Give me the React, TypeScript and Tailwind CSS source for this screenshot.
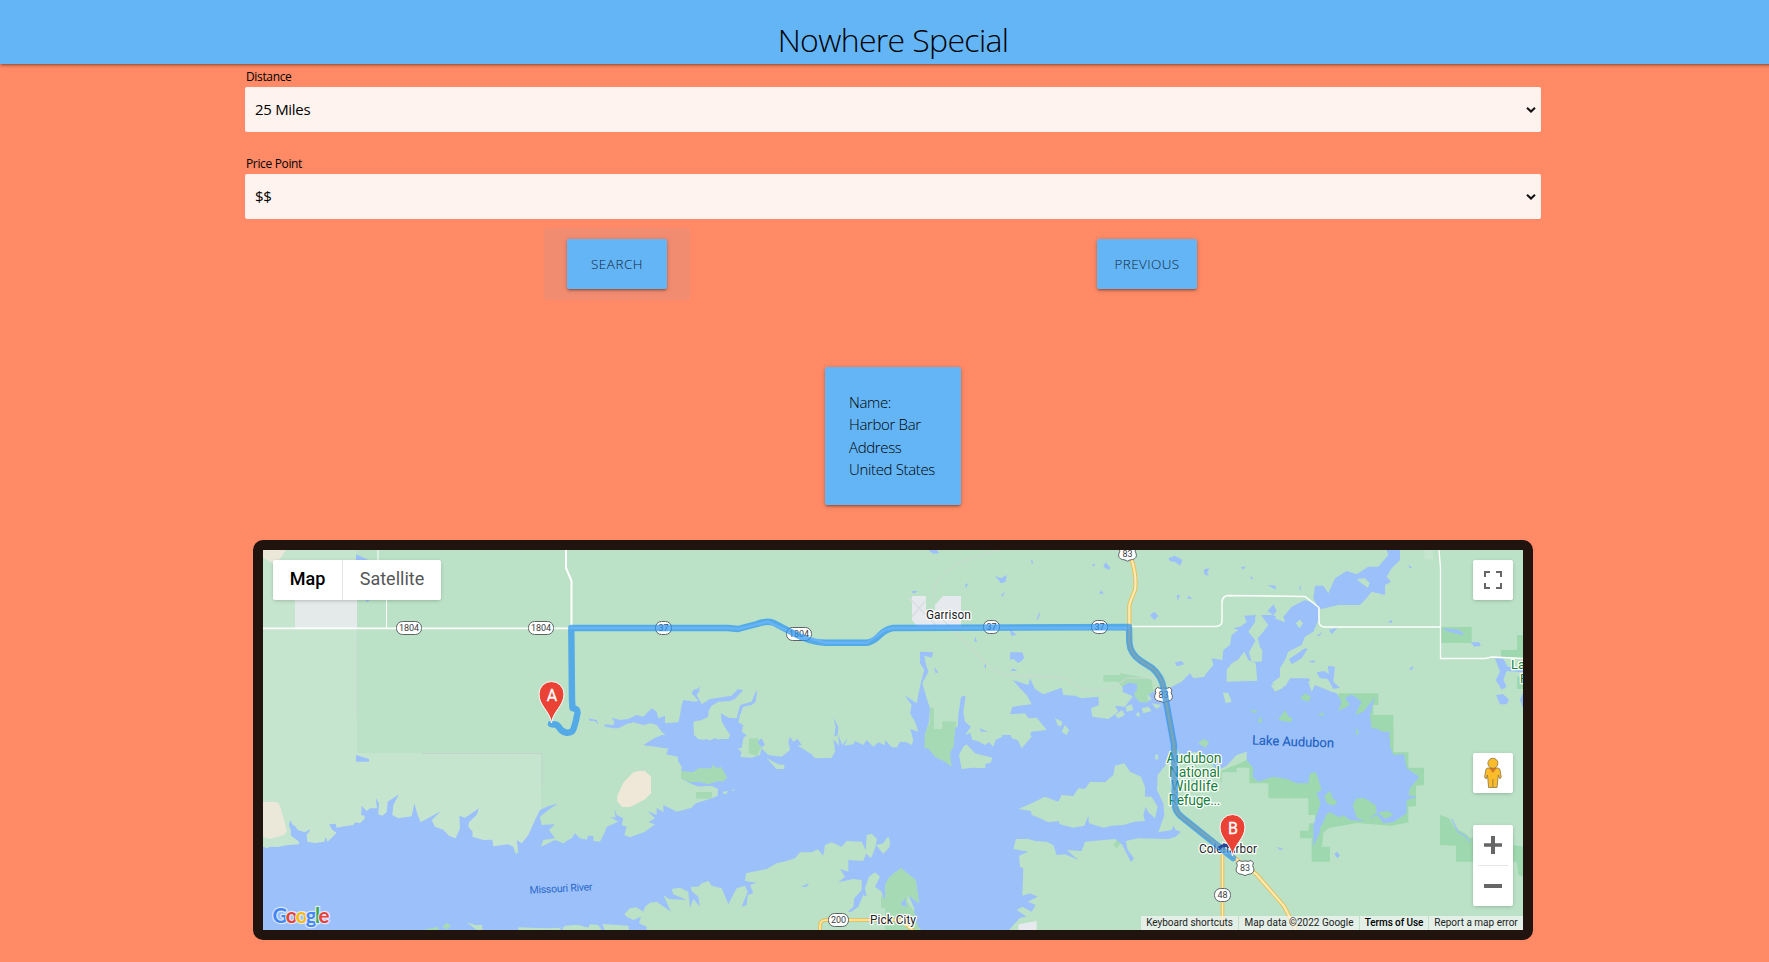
import type { ReactNode } from "react";

const LAND = "#bbe2c6";
const WATER = "#9cc0fa";
const PARK = "#a6dab4";
const REFUGE = "#9ed8ae";
const PALE = "#c6e5cf";
const SAND = "#ebe8da";
const TOWN = "#e6e9ed";

function Tile({ x, y, children }: { x: number; y: number; children: ReactNode }) {
  return <g transform={`translate(${x} ${y}) scale(0.333333)`}>{children}</g>;
}

function Poly({ p, f }: { p: string; f: string }) {
  return <polygon points={p} fill={f} />;
}

function Oval({ x, y, label, w }: { x: number; y: number; label: string; w: number }) {
  return (
    <g>
      <rect x={x - w / 2} y={y - 6.5} width={w} height={13} rx={6} fill="#fff" stroke="#5f6368" strokeWidth={1} />
      <text x={x} y={y + 3.2} textAnchor="middle" fontSize={9} fill="#3c4043">{label}</text>
    </g>
  );
}

function UsShield({ x, y, label }: { x: number; y: number; label: string }) {
  return (
    <g>
      <path
        d={`M${x - 6} ${y - 7.5}q2.5 1.5 6 .4q3.500 1.100 6 -.4l2.500 2.300q-1.800 3 .2 5.500q1 4.500 -3.500 5.700q-3 .2 -5.200 1.700q-2.200 -1.500 -5.200 -1.700q-4.500 -1.200 -3.500 -5.700q2 -2.500 .2 -5.500z`}
        fill="#fff"
        stroke="#5f6368"
        strokeWidth={1}
      />
      <text x={x} y={y + 3.2} textAnchor="middle" fontSize={9} fill="#3c4043">{label}</text>
    </g>
  );
}

function Pin({ x, y, label }: { x: number; y: number; label: string }) {
  return (
    <g>
      <path
        d={`M${x} ${y}C${x - 1.5} ${y - 12} ${x - 12.5} ${y - 17} ${x - 12.5} ${y - 29}a12.500 12.500 0 0 1 25 0C${x + 12.5} ${y - 17} ${x + 1.5} ${y - 12} ${x} ${y}z`}
        fill="#ea4335"
        stroke="#fff"
        strokeWidth={1}
      />
      <text x={x + 0.5} y={y - 22.5} textAnchor="middle" fontSize={16} fill="#fff" stroke="#fff" strokeWidth={0.3}>{label}</text>
    </g>
  );
}

const ROUTE =
  "M551 724L555 724.500Q558 725 559.500 728Q562 732 567 732.800Q572 733 573.500 729Q576 722 577.500 713Q578 709 572.500 708L572 700L571.300 628L728 628Q733 628.500 738 629L757 624Q768 620 774 623L792 632.500Q810 642.500 825 642.700L867 642.700Q873 642 880 635Q886 629 893 628L1129 627L1129.300 642Q1130 654 1141 661L1152 668Q1162 676 1164 690L1174 745L1175 806Q1176 813 1183 818L1233 858";

function MapCanvas() {
  return (
    <svg className="block h-full w-full font-['Roboto',sans-serif]" viewBox="263 550 1260 380">
      <rect x={263} y={550} width={1260} height={380} fill={LAND} />
      {/* tribal and federal land tints */}
      <polygon points="263,550 357,550 357,753 541,753 541,815 520,850 263,850" fill={PALE} />
      <polyline points="357,634 357,715" fill="none" stroke="#c5d6d4" strokeWidth={1} />
      <polyline points="422,753.500 542,753.500 542,788" fill="none" stroke="#c3d3cb" strokeWidth={1} />
      <rect x={295} y={590} width={62} height={38} fill="#e4e9ea" />
      <polygon points="263,550 286,550 279,560 278,566 263,558" fill={SAND} />
      <polygon points="263,802 277,802 280,806 287,831 284,835 270,839 263,837" fill={SAND} />

      {/* refuge */}
      <Tile x={1130} y={735}>
        <Poly f={REFUGE} p="220,145 262,112 330,85 360,70 620,-60 650,-60 790,-60 790,52 835,52 835,98 882,98 882,150 858,152 858,212 835,215 835,262 785,272 680,264 580,282 578,320 575,335 600,335 600,380 545,380 545,310 510,310 510,287 535,287 538,265 555,265 555,240 535,240 535,190 415,190 415,145 358,145 358,98 320,98 320,112 275,112 275,145" />
        <Poly f={REFUGE} p="930,240 955,248 975,280 1005,295 1022,310 1050,296 1150,300 1150,330 1179,335 1179,425 1165,420 1160,380 978,380 978,332 930,330" />
      </Tile>
      <Tile x={1205} y={535}>
        <Poly f={REFUGE} p="400,475 520,475 520,510 505,510 505,580 565,580 565,640 400,640" />
        <Poly f={REFUGE} p="707,276 800,276 800,324 707,324" />
        <Poly f={REFUGE} p="936,300 955,300 955,368 888,368 888,345 936,345" />
        <Poly f={REFUGE} p="936,425 955,425 955,462 936,462" />
        <Poly f={PALE} p="658,45 684,45 684,75 658,72" />
      </Tile>

      {/* water */}
      <Tile x={245} y={735}>
        <Poly f={WATER} p="54,335 67,340 75,335 98,336 130,330 163,328 160,318 138,302 137,285 132,270 136,255 142,268 152,275 158,285 180,292 195,283 192,292 185,298 187,320 210,324 238,320 242,306 248,320 275,293 262,285 252,268 272,266 275,278 290,275 325,270 332,262 345,265 360,250 358,242 348,240 350,212 365,228 375,220 396,220 392,188 402,205 400,238 412,242 425,232 428,200 462,178 445,210 442,240 460,250 500,244 508,205 518,240 527,262 588,228 560,256 570,275 595,284 612,302 632,310 645,280 643,242 660,248 680,235 702,220 695,240 672,262 670,275 683,290 682,305 715,315 742,314 745,334 790,328 805,335 812,358 820,352 815,315 830,325 850,300 870,255 885,225 905,215 940,205 910,225 885,245 890,270 930,268 912,285 930,310 895,315 888,335 910,325 930,315 955,325 975,322 990,310 990,590 54,590" />
        <Poly f={WATER} p="333,60 350,65 372,72 372,80 333,80" />
      </Tile>
      <Tile x={245} y={535}>
        <Poly f={WATER} p="333,58 350,65 372,76 333,80" />
        <Poly f={WATER} p="356,192 378,192 368,201" />
      </Tile>
      <Tile x={565} y={535}>
        <Poly f={WATER} p="235,630 275,605 308,605 290,590 275,570 258,565 235,570 205,562 185,567 160,580 145,580 120,575 118,568 145,570 148,560 140,548 165,555 190,552 215,540 235,545 260,520 275,530 280,550 300,542 300,565 340,562 345,540 350,510 355,495 390,500 400,497 380,475 385,465 400,460 405,452 402,470 395,480 405,498 410,508 435,492 460,488 500,482 518,463 535,465 510,492 495,498 460,500 440,512 430,530 430,545 410,555 385,560 387,600 400,612 430,618 450,610 475,620 500,618 500,605 485,585 470,560 468,535 490,548 515,550 525,510 560,500 570,475 577,465 572,500 560,510 535,515 525,540 520,562 535,570 530,590 545,600 535,610 530,640 300,640" />
        <Poly f={WATER} p="70,550 95,555 100,570 90,558 75,558" />
        <Poly f={WATER} p="805,548 820,575 818,600 808,605 812,575" />
      </Tile>
      <Tile x={565} y={735}>
        <Poly f={WATER} p="0,320 20,310 30,295 45,310 65,314 70,302 85,302 85,318 105,320 120,290 125,275 160,260 135,245 152,248 148,220 155,240 175,250 170,270 185,275 178,300 195,307 240,290 270,268 250,262 270,250 248,228 275,240 275,218 295,232 295,210 335,230 380,218 392,205 440,190 458,182 458,162 440,154 400,155 372,143 348,130 350,95 340,80 338,65 303,58 312,35 330,15 325,5 290,8 262,30 240,32 270,12 290,0 385,0 400,18 425,12 445,22 465,12 490,12 495,0 530,0 518,40 530,52 526,66 560,68 585,60 590,36 575,22 590,10 600,30 588,38 610,60 650,65 675,45 670,20 675,5 685,20 698,12 710,30 698,32 740,58 750,70 800,68 810,50 808,30 805,12 822,32 820,0 832,30 848,10 838,32 865,28 870,18 895,30 905,15 925,35 940,22 980,40 990,30 990,405 975,420 965,445 962,480 968,500 958,503 950,470 930,455 945,425 930,412 912,425 900,460 905,485 895,480 880,515 860,530 848,530 865,515 868,490 890,465 890,435 865,432 820,442 840,425 825,402 850,410 850,375 895,378 905,350 890,320 845,318 830,335 800,322 780,330 775,362 758,343 740,352 705,352 690,370 665,378 635,385 605,402 543,415 540,438 575,443 555,450 565,475 548,480 545,510 530,515 548,470 540,452 515,460 490,508 470,460 440,452 430,438 410,445 400,455 378,455 380,468 400,485 405,515 385,492 375,518 370,470 345,458 320,462 325,478 365,495 312,492 295,480 318,530 275,500 255,503 240,515 235,530 215,517 195,520 178,537 185,545 205,555 228,545 222,565 245,575 245,590 0,590" />
        <Poly f={WATER} p="708,455 732,444 725,456" />
      </Tile>
      <Tile x={885} y={535}>
        <Poly f={WATER} p="105,350 145,352 140,368 118,362 122,385 130,410 112,445 125,490 135,520 132,560 120,600 118,640 60,640 75,600 70,580 100,590 90,560 75,535 80,510 58,480 95,505 108,440 118,405 105,385" />
        <Poly f={WATER} p="228,485 242,482 235,530 240,560 258,575 240,600 262,590 255,615 290,605 285,580 330,600 350,615 380,600 420,620 440,590 485,585 455,548 430,550 420,535 375,538 382,515 440,508 425,480 405,460 383,435 430,450 435,430 450,462 475,478 530,458 535,480 570,482 590,490 640,485 642,510 618,520 622,545 670,552 700,530 690,512 720,515 740,488 770,500 800,495 790,478 770,478 755,500 735,478 712,470 718,450 750,443 758,465 830,470 860,455 890,440 915,415 925,430 960,425 990,410 990,640 200,640 200,580 218,575 220,540" />
        <Poly f={WATER} p="375,352 412,352 418,370 400,385 385,372 375,375" />
        <Poly f={WATER} p="330,122 348,130 365,120 362,140 348,145" />
        <Poly f={WATER} p="850,70 870,62 893,75 885,92 872,82 855,78" />
        <Poly f={WATER} p="795,240 808,230 820,243 808,256" />
        <Poly f={WATER} p="655,95 662,82 676,98 672,105" />
        <Poly f={WATER} p="956,105 972,98 965,112 972,124 958,118" />
        <Poly f={WATER} p="870,382 890,378 898,388 875,394" />
        <Poly f={WATER} p="130,45 155,45 163,55 145,56" />
        <Poly f={WATER} p="437,75 444,78 442,90" />
        <Poly f={WATER} p="240,150 251,143 243,160" />
        <Poly f={WATER} p="455,255 460,238 466,232 460,252" />
        <Poly f={WATER} p="642,175 650,166 656,178" />
        <Poly f={WATER} p="875,180 885,180 878,198" />
        <Poly f={WATER} p="905,190 912,182 922,192" />
        <Poly f={WATER} p="267,318 272,305 276,322" />
        <Poly f={WATER} p="375,282 395,300 378,302" />
        <Poly f={WATER} p="375,408 385,400 397,408" />
        <Poly f={WATER} p="147,395 160,412 152,415" />
        <Poly f={WATER} p="348,180 360,170 352,186" />
        <Poly f={WATER} p="82,168 96,168 92,174 82,174" />
        <Poly f={WATER} p="620,92 628,85 630,94" />
        <Poly f={WATER} p="297,395 303,385 303,400" />
      </Tile>
      <Tile x={885} y={735}>
        <Poly f={WATER} p="0,0 855,0 860,60 838,95 818,120 816,165 835,205 838,240 820,292 860,285 865,272 872,285 888,290 872,305 850,312 760,310 722,318 728,345 747,370 738,382 712,330 690,312 600,320 590,348 545,345 580,375 540,358 515,360 505,330 485,320 450,318 430,312 393,312 385,342 430,350 402,362 405,395 415,400 412,482 435,475 458,485 428,500 452,510 440,530 412,515 395,525 425,545 405,548 372,585 108,585 85,560 88,520 70,480 102,505 92,435 48,400 12,428 0,450" />
      </Tile>
      <Tile x={1205} y={535}>
        <Poly f={WATER} p="0,420 25,390 20,370 52,375 55,345 75,330 80,300 100,285 85,280 105,275 125,262 118,242 152,240 150,262 130,290 150,315 155,345 165,335 158,310 175,290 190,270 168,240 205,240 240,262 235,245 260,215 300,195 325,205 340,220 340,255 325,290 300,305 290,330 250,350 240,375 225,400 225,425 200,445 240,455 255,430 310,430 330,450 380,470 395,475 410,500 400,528 435,510 420,490 440,478 470,500 450,540 475,530 510,487 495,540 500,580 520,582 555,610 555,650 0,650" />
        <Poly f={WATER} p="325,190 330,152 355,152 370,175 390,130 425,108 455,118 490,95 520,95 550,60 545,45 585,45 585,75 560,100 545,125 558,140 540,150 540,180 500,170 480,195 465,210 400,210 350,222 340,218" />
        <Poly f={WATER} p="188,228 205,208 215,228 205,240" />
        <Poly f={WATER} p="252,372 300,340 308,342 290,370 260,388" />
        <Poly f={WATER} p="335,412 358,408 372,418 368,392 390,395 385,440 405,458 385,462 368,432 345,430" />
        <Poly f={WATER} p="715,280 760,284 778,296 770,300 718,286" />
        <Poly f={WATER} p="797,322 822,322 828,332 808,335" />
        <Poly f={WATER} p="870,370 895,372 908,395 955,400 955,412 905,408 895,435 905,455 890,464 872,435 885,410" />
        <Poly f={WATER} p="873,480 895,478 912,495 905,508 885,508" />
        <Poly f={WATER} p="955,470 945,495 955,522" />
        <Poly f={WATER} p="372,285 398,278 380,298" />
        <Poly f={WATER} p="187,150 212,152 212,164" />
        <Poly f={WATER} p="282,165 288,148 288,162" />
        <Poly f={WATER} p="0,102 12,104 0,122" />
        <Poly f={WATER} p="107,97 122,94 116,104" />
        <Poly f={WATER} p="134,124 144,128 142,136" />
        <Poly f={WATER} p="610,90 622,97 614,100" />
        <Poly f={WATER} p="548,262 562,254 560,264" />
        <Poly f={WATER} p="612,402 624,392 622,405" />
        <Poly f={WATER} p="335,302 352,290 345,302" />
        <Poly f={WATER} p="310,378 332,376 325,384" />
      </Tile>
      <Tile x={1130} y={735}>
        <Poly f={WATER} p="120,-10 780,-10 775,20 790,60 822,58 830,100 868,125 840,160 835,180 862,186 830,195 830,235 790,262 760,265 742,240 700,258 660,255 640,240 610,258 590,235 570,290 550,335 550,270 572,205 560,175 575,165 558,112 540,115 535,145 500,145 470,132 430,125 385,140 368,125 370,100 350,75 350,50 320,60 290,92 260,108 240,75 200,50 150,60" />
        <Poly f={WATER} p="613,357 622,350 630,362 622,370" />
        <Poly f={WATER} p="440,335 460,342 450,345" />
        <polyline points="965,252 985,292 1005,302 1020,320" fill="none" stroke={WATER} strokeWidth={4} />
      </Tile>

      {/* islands, peninsulas and parks */}
      <Tile x={245} y={735}>
        <Poly f={PARK} p="535,585 580,575 580,585" />
        <Poly f={PARK} p="592,575 605,564 618,572 605,584" />
        <Poly f={LAND} p="665,562 690,570 712,570 712,585 695,585" />
        <Poly f={LAND} p="820,577 900,580 950,578 942,586 820,586" />
        <Poly f={LAND} p="955,575 990,570 990,586 952,586" />
      </Tile>
      <Tile x={565} y={735}>
        <Poly f={PARK} p="348,108 385,112 400,100 440,100 442,88 455,100 468,95 487,128 472,140 460,138 430,148 400,140 375,142 348,130" />
        <Poly f={LAND} p="350,142 372,148 405,155 440,153 459,162 455,182 390,200" />
        <Poly f={PARK} p="393,171 441,171 441,191 393,191" />
        <Poly f={LAND} p="474,170 488,168 486,176 474,176" />
        <Poly f={LAND} p="497,166 512,163 505,167" />
        <Poly f={PARK} p="553,10 580,10 580,28 590,38 582,48 578,62 550,55" />
        <Poly f={LAND} p="605,70 640,88 658,90 658,102 635,102" />
        <Poly f={LAND} p="905,300 920,296 936,312 930,340 918,370 902,355" />
        <Poly f={LAND} p="933,330 955,325 968,305 974,335 955,356" />
        <Poly f={PARK} p="965,440 990,410 990,518 948,518 948,480 965,500" />
        <Poly f="#efe8d8" p="205,112 225,107 240,108 258,125 258,175 240,193 195,216 172,216 156,198 158,180 175,143" />
        <Poly f={LAND} p="0,572 40,570 70,578 75,568 100,570 110,586 0,586" />
        <Poly f={LAND} p="112,567 190,572 192,586 120,586" />
      </Tile>
      <Tile x={885} y={535}>
        <Poly f={PARK} p="655,420 705,420 705,415 785,428 800,435 805,470 788,480 790,502 765,502 750,485 745,465 715,462 700,440 655,440" />
        <Poly f={WATER} p="712,455 730,443 756,447 755,468 735,480 715,472" />
        <Poly f={LAND} p="690,540 712,525 720,540 700,550" />
        <Poly f={LAND} p="722,515 740,508 745,525 725,530" />
        <Poly f={LAND} p="770,520 790,515 800,528 775,535" />
        <Poly f={LAND} p="800,505 830,510 815,522" />
        <Poly f={LAND} p="750,540 762,530 765,545" />
        <Poly f={LAND} p="510,550 532,560 528,575 518,570" />
        <Poly f={LAND} p="530,590 540,570 552,585 545,600" />
        <Poly f={PARK} p="135,518 147,520 147,582 172,582 172,558 215,560 212,570 205,640 118,640 122,590 135,560" />
        <Poly f={LAND} p="148,560 170,545 170,582 148,582" />
      </Tile>
      <Tile x={885} y={735}>
        <Poly f={LAND} p="0,-20 75,-20 85,15 80,30 65,22 45,20 35,38 20,36 0,15" />
        <Poly f={PARK} p="118,0 205,0 207,30 195,55 200,95 180,80 150,65 120,28" />
        <Poly f={LAND} p="255,-10 262,15 278,18 300,30 312,22 325,35 332,15 352,5 345,-10" />
        <Poly f={LAND} p="375,-10 380,10 398,15 410,40 440,5 430,-10" />
        <Poly f={LAND} p="245,28 270,55 322,68 318,82 300,88 302,100 265,98 230,102 222,60 235,35" />
        <Poly f={LAND} p="400,222 440,205 480,185 520,200 530,180 565,183 580,160 600,162 615,140 660,142 685,120 690,92 718,85 735,110 768,125 780,155 780,185 800,185 818,215 810,250 790,232 782,215 775,240 780,258 748,260 715,270 680,272 655,278 612,265 610,242 598,272 565,278 525,268 520,258 490,262 470,252 440,240 438,228" />
        <Poly f={LAND} p="810,60 818,58 820,72 812,74" />
        <Poly f={PARK} p="685,330 695,315 708,325 695,340" />
        <Poly f={LAND} p="0,325 12,305 15,328 0,345" />
        <Poly f={PARK} p="0,450 12,428 48,400 92,435 102,505 70,480 66,500 88,530 95,565 105,585 0,585" />
        <Poly f={WATER} p="48,505 60,490 66,515 52,512" />
        <Poly f={TOWN} p="400,585 400,568 455,558 455,585" />
        <Poly f={PARK} p="940,25 955,12 972,20 962,38" />
      </Tile>
      <Tile x={1205} y={535}>
        <Poly f={LAND} p="118,350 130,375 152,385 157,437 65,440 65,405 80,385 98,375" />
        <Poly f={LAND} p="150,320 172,345 170,380 140,380 132,352" />
        <Poly f={LAND} p="272,265 285,254 294,265 284,280" />
        <Poly f={LAND} p="210,250 225,232 238,262" />
        <Poly f={LAND} p="455,132 480,130 494,145 488,158 470,145" />
        <Poly f={LAND} p="54,472 70,475 80,500 62,505" />
        <Poly f={LAND} p="198,450 225,443 235,458 210,470" />
        <Poly f={LAND} p="310,440 325,430 330,450 320,470" />
        <Poly f={REFUGE} p="285,490 300,475 318,485 310,500" />
        <Poly f={REFUGE} p="220,555 240,525 250,545 262,548 258,562" />
        <Poly f={REFUGE} p="158,560 168,543 170,565" />
        <Poly f={REFUGE} p="135,525 158,528 148,535" />
        <Poly f={REFUGE} p="336,540 356,532 355,542" />
        <Poly f={REFUGE} p="452,575 462,598 454,598" />
      </Tile>
      <Tile x={1130} y={735}>
        <Poly f={LAND} p="118,60 180,60 230,78 262,110 275,145 290,150 130,250" />
        <Poly f={REFUGE} p="583,182 600,168 608,190 622,200 612,212 590,205" />
        <Poly f={REFUGE} p="668,210 680,190 705,190 738,212 740,235 705,258 680,248" />
        <Poly f={REFUGE} p="745,232 775,228 790,240 765,252" />
        <Poly f={REFUGE} p="570,280 598,230 650,260 600,275 572,300" />
      </Tile>

      {/* Garrison */}
      <polygon points="912,596 926,596 926,610 935,610 935,605 943,596 961,596 961,627 918,627 912,620" fill={TOWN} />
      <path d="M909 598L936 625M925 601L912 617" stroke="#dadde0" strokeWidth={1.5} fill="none" />
      <path
        d="M1000 550Q975 556 958 563Q938 577 934 588L934 600M936 613L958 635L990 667Q998 674 1010 675L1063 678Q1070 680 1080 688L1086 690H1110L1127 678H1155"
        fill="none"
        stroke="#cdd8d2"
        strokeWidth={1}
      />

      {/* minor roads */}
      <g fill="none" stroke="#fff" strokeWidth={1.8}>
        <path d="M263 628.300H571" />
        <path d="M386.500 600V628M378 550V560" strokeWidth={1} />
        <path d="M566 550V568L571.500 581V628" strokeWidth={2} />
        <path d="M1129 626.500H1216Q1222 626 1222 621V603Q1222 596 1228 595.500L1305 596.500L1319 607.500V621Q1319 627 1325 627H1440.500" strokeWidth={1.4} />
        <path d="M1439 550L1440.500 568V658.500H1485L1492 657L1523 658.500" strokeWidth={1.3} />
        <path d="M571.500 628H728L738 629L768 621.700L792 633L825 642.700H867L885 630L893 628H1129" strokeWidth={2.5} />
      </g>

      {/* highways */}
      <g fill="none">
        <path d="M1131 558Q1137 575 1135 590Q1129.500 603 1129.300 606V642Q1130 654 1141 661L1152 668Q1162 676 1164 690L1174 745L1175 806Q1176 813 1183 818L1240 862L1256 874L1284 906L1297 932" stroke="#ecbb48" strokeWidth={4} />
        <path d="M1222.500 850V932M820 932V926Q820 920 826 920H915M905 924L915 932" stroke="#ecbb48" strokeWidth={3.5} />
        <path d="M1131 558Q1137 575 1135 590Q1129.500 603 1129.300 606V642Q1130 654 1141 661L1152 668Q1162 676 1164 690L1174 745L1175 806Q1176 813 1183 818L1240 862L1256 874L1284 906L1297 932" stroke="#feebb5" strokeWidth={2.2} />
        <path d="M1222.500 850V932M820 932V926Q820 920 826 920H915M905 924L915 932" stroke="#feebb5" strokeWidth={1.6} />
      </g>

      <Oval x={409} y={628} w={25} label="1804" />
      <Oval x={541} y={628} w={25} label="1804" />
      <Oval x={663.5} y={628} w={16} label="37" />
      <Oval x={799} y={634} w={25} label="1804" />
      <Oval x={991.5} y={627} w={16} label="37" />
      <Oval x={1099.5} y={627} w={16} label="37" />
      <Oval x={838.5} y={920} w={20} label="200" />
      <Oval x={1222.5} y={895} w={16} label="48" />
      <UsShield x={1127.5} y={553.5} label="83" />
      <UsShield x={1163.5} y={695} label="83" />
      <UsShield x={1245} y={868} label="83" />

      <g paintOrder="stroke" stroke="#fff" strokeWidth={2.5} strokeLinejoin="round" textAnchor="middle">
        <text x={948.5} y={619} fontSize={12} textLength={45} fill="#202124">Garrison</text>
        <text x={893} y={924} fontSize={12} textLength={46} fill="#202124">Pick City</text>
        <text x={1228} y={853} fontSize={12} textLength={58} fill="#202124">Coleharbor</text>
        <g fill="#188038" fontSize={14}>
          <text x={1194} y={763} textLength={55}>Audubon</text>
          <text x={1194.5} y={777} textLength={51}>National</text>
          <text x={1194.5} y={791} textLength={47}>Wildlife</text>
          <text x={1194.5} y={805} textLength={52}>Refuge...</text>
          <text x={1511} y={669} fontSize={13} textAnchor="start">La</text>
          <text x={1520} y={683} fontSize={13} textAnchor="start">R</text>
        </g>
      </g>
      <text x={1293} y={746} fontSize={13} textAnchor="middle" textLength={82} fill="#1c62c4" stroke="#1c62c4" strokeWidth={0.15} transform="rotate(2 1293 742)">Lake Audubon</text>
      <text x={561} y={892} fontSize={10.5} textAnchor="middle" textLength={63} fill="#2a6acb" transform="rotate(-3 561 888)">Missouri River</text>

      <path d={ROUTE} fill="none" stroke="#2693f4" strokeOpacity={0.7} strokeWidth={6.4} strokeLinejoin="round" strokeLinecap="round" />
      <path d="M1129.300 630V642Q1130 654 1141 661L1152 668Q1162 676 1164 690L1174 745L1175 806Q1176 813 1183 818L1226 852" fill="none" stroke="#7fa0a8" strokeOpacity={0.6} strokeWidth={2.6} />
      <path d="M1219 848Q1225 843 1230 847" stroke="#26489b" strokeWidth={3} fill="none" />
      <Pin x={551.5} y={723} label="A" />
      <Pin x={1232.5} y={856} label="B" />

      <text x={272.5} y={923} fontSize={20.5} textLength={57} fontFamily="Lato, sans-serif" fontWeight={700} paintOrder="stroke" stroke="#dce8fb" strokeWidth={2.5} strokeLinejoin="round">
        <tspan fill="#4285f4">G</tspan>
        <tspan fill="#ea4335">o</tspan>
        <tspan fill="#fbbc05">o</tspan>
        <tspan fill="#4285f4">g</tspan>
        <tspan fill="#34a853">l</tspan>
        <tspan fill="#ea4335">e</tspan>
      </text>
    </svg>
  );
}

function SelectField({ label, value, className }: { label: string; value: string; className: string }) {
  return (
    <div className={className}>
      <div className="flex h-[23px] items-center pt-[3px] pl-px text-[12px] tracking-[-0.35px] text-black">{label}</div>
      <div className="flex h-[45px] items-center justify-between rounded-[2px] border border-[#f2f2f2]/60 bg-[#fff3ef] pr-[4px] pl-[9px] text-[15px] tracking-[-0.3px] text-black">
        <span>{value}</span>
        <svg className="h-[10px] w-[10px]" viewBox="0 0 10 10" fill="none" stroke="#101010" strokeWidth="2">
          <path d="M1 2.700L5 6.500L9 2.700" />
        </svg>
      </div>
    </div>
  );
}

const SHADOW =
  "shadow-[0_2px_2px_0_rgba(0,0,0,0.14),0_3px_1px_-2px_rgba(0,0,0,0.12),0_1px_5px_0_rgba(0,0,0,0.2)]";

export default function App() {
  return (
    <div className="h-[962px] w-full overflow-hidden bg-[#ff8a65] font-['Open_Sans','Noto_Sans',sans-serif] text-black">
      <header className={`relative h-16 w-[1786px] bg-[#64b5f6] pt-[18px] text-center ${SHADOW}`}>
        <h1 className="text-[32px] leading-[44px] font-[350] tracking-[-0.65px]">Nowhere Special</h1>
      </header>
      <main className="flex w-[1786px] flex-col items-center">
        <form className="w-[1296px]">
          <SelectField label="Distance" value="25 Miles" className="" />
          <SelectField label="Price Point" value="$$" className="mt-[19px]" />
        </form>
        <div className="mt-[9px] flex w-full pl-[544px]">
          <div className="rounded-[3px] bg-[#f28c70] px-[23px] py-[11px]">
            <button className={`block h-[50px] w-[100px] rounded-[2px] bg-[#64b5f6] text-[13.5px] font-[350] tracking-[0.5px] text-[#10273c] ${SHADOW}`}>SEARCH</button>
          </div>
          <button className={`mt-[11px] ml-[407px] h-[50px] w-[100px] rounded-[2px] bg-[#64b5f6] text-[13.5px] font-[350] tracking-[0.4px] text-[#10273c] ${SHADOW}`}>PREVIOUS</button>
        </div>
        <section className={`mt-[67px] h-[138px] w-[136px] rounded-[2px] bg-[#64b5f6] pt-6 pl-6 text-[15px] leading-[22.4px] font-[350] tracking-[-0.35px] whitespace-nowrap ${SHADOW}`}>
          <p>Name:</p>
          <p>Harbor Bar</p>
          <p>Address</p>
          <p>United States</p>
        </section>
        <section className="relative mt-[35px] h-[400px] w-[1280px] overflow-hidden rounded-[10px] border-[10px] border-[#21130d] bg-[#21130d] font-['Roboto',sans-serif]">
          <MapCanvas />
          <div className="absolute top-[10px] left-[10px] flex h-10 rounded-[2px] bg-white text-[18px] leading-[38px] shadow-[0_1px_4px_-1px_rgba(0,0,0,0.3)]">
            <span className="w-[70px] border-r border-[#e6e6e6] text-center font-medium text-black">Map</span>
            <span className="w-[98px] text-center text-[#565656]">Satellite</span>
          </div>
          <div className="absolute top-[10px] right-[10px] flex size-10 items-center justify-center rounded-[2px] bg-white shadow-[0_1px_4px_-1px_rgba(0,0,0,0.3)]">
            <svg className="size-[18px]" viewBox="0 0 18 18" fill="#666">
              <path d="M0 0v6h2V2h4V0H0zm16 0h-4v2h4v4h2V0h-2zm0 16h-4v2h6v-6h-2v4zM2 12H0v6h6v-2H2v-4z" />
            </svg>
          </div>
          <div className="absolute top-[203px] right-[10px] flex size-10 items-center justify-center rounded-[2px] bg-white shadow-[0_1px_4px_-1px_rgba(0,0,0,0.3)]">
            <svg className="h-[32px] w-[20px]" viewBox="0 0 20 32" fill="#fbbc2c" stroke="#8a7341" strokeWidth="0.8">
              <path d="M5 11Q3.200 11 2.800 13L1.600 20Q1.800 21.500 3.500 21.500L4.500 18L5.600 30.500H14L15.300 18L16.500 21.500Q18 21.500 18.200 20L17 13Q16.500 11 14.800 11z" />
              <path d="M6 11L9.900 16L13.800 11z" fill="#d87a22" stroke="none" />
              <path d="M9.900 22V30" />
              <circle cx="9.9" cy="6.3" r="5" />
            </svg>
          </div>
          <div className="absolute top-[275px] right-[10px] flex h-[81px] w-10 flex-col items-center rounded-[2px] bg-white shadow-[0_1px_4px_-1px_rgba(0,0,0,0.3)]">
            <svg className="mt-[11px] h-[18px] w-[18px]" viewBox="0 0 18 18" fill="#666">
              <path d="M18 7.200H11V0H7v7.200H0v3.600h7V18h4v-7.200h7z" />
            </svg>
            <div className="mt-[11px] h-px w-[30px] bg-[#e6e6e6]" />
            <div className="mt-[18px] h-[4px] w-[18px] bg-[#666]" />
          </div>
          <div className="absolute right-0 bottom-0 flex h-[14px] gap-px text-[10px] leading-[14px] whitespace-nowrap text-[#222]">
            <span className="w-[97px] bg-[#f5f5f5]/70 text-center">Keyboard shortcuts</span>
            <span className="w-[120px] bg-[#f5f5f5]/70 text-center">Map data ©2022 Google</span>
            <span className="w-[68px] bg-[#f5f5f5]/70 text-center font-medium tracking-[-0.1px] text-black">Terms of Use</span>
            <span className="w-[94px] bg-[#f5f5f5]/70 text-center">Report a map error</span>
          </div>
        </section>
      </main>
    </div>
  );
}
